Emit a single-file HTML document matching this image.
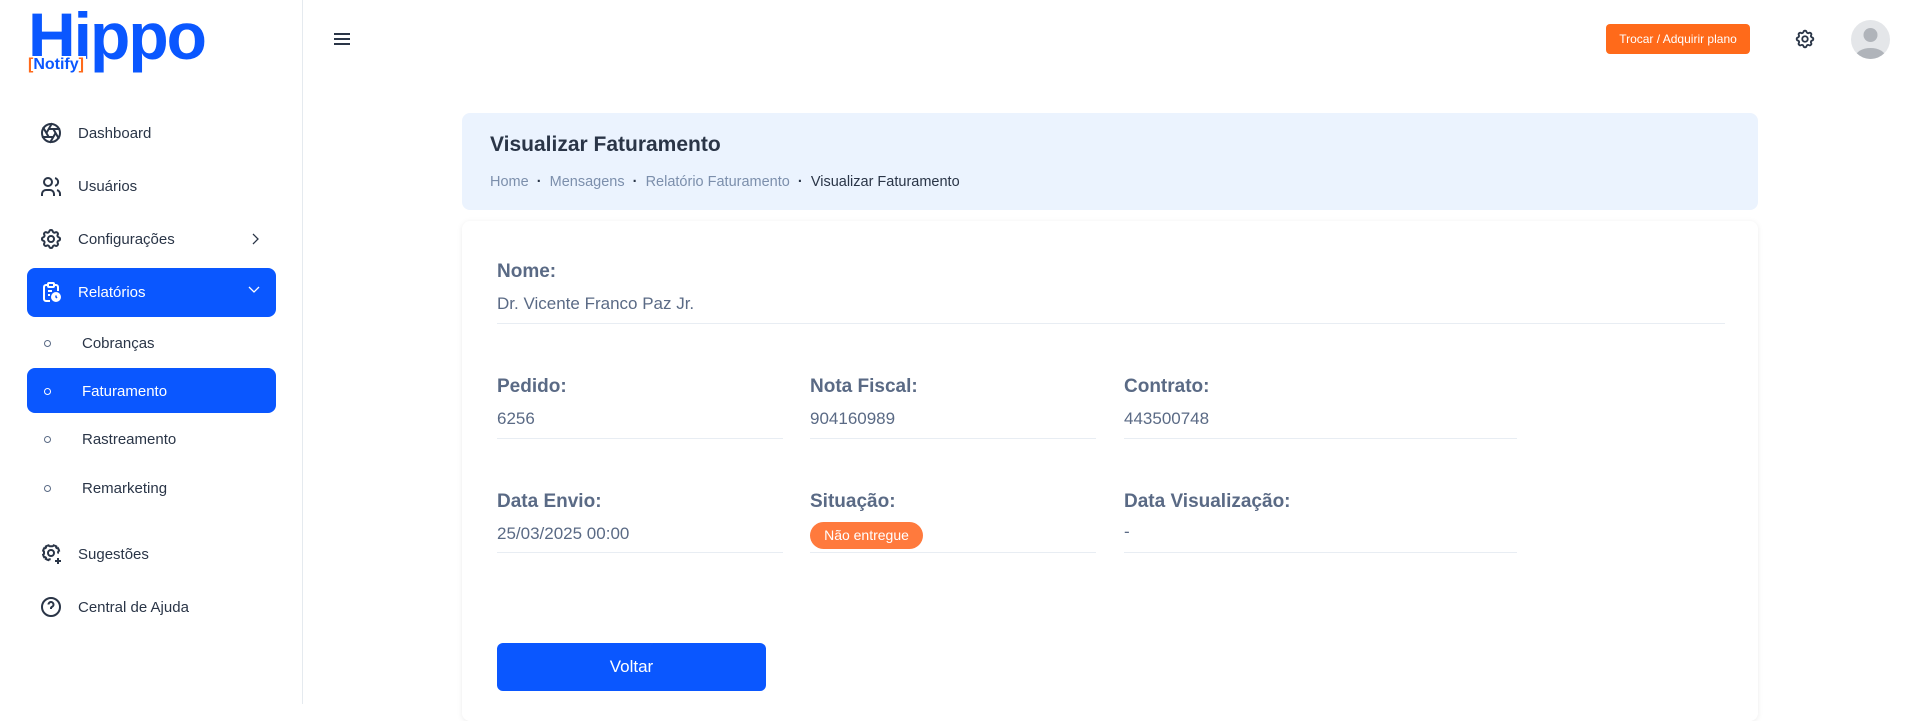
<!DOCTYPE html>
<html><head><meta charset="utf-8"><style>
*{margin:0;padding:0;box-sizing:border-box}
body{width:1918px;height:704px;overflow:hidden;background:#fff;font-family:"Liberation Sans",sans-serif;color:#2a3547;position:relative}
.side{position:absolute;left:0;top:0;width:303px;height:704px;border-right:1px solid #e5eaef;background:#fff}
.abs{position:absolute}
.nav{position:absolute;left:78px;font-size:15px;color:#2a3547}
.ico{position:absolute;left:39px;width:24px;height:24px}
.act{position:absolute;left:27px;width:249px;background:#0a57ff;border-radius:8px}
.sub{position:absolute;left:82px;font-size:15px;color:#2a3547}
.dot{position:absolute;left:44px;width:7px;height:7px;border:1.3px solid #5a6a85;border-radius:50%}
.lbl{position:absolute;font-size:19px;font-weight:bold;color:#5a6a85}
.val{position:absolute;font-size:17px;color:#5a6a85}
.ln{position:absolute;height:1px;background:#e8edf3}
b.d{font-weight:bold;color:#2a3547}
</style></head><body>
<div class="side">
  <div class="abs" style="left:28px;top:-2px;font-size:66px;font-weight:bold;color:#0a57ff;letter-spacing:-2px">Hippo</div>
  <div class="abs" style="left:28px;top:56px;font-size:16px;font-weight:bold;color:#0a57ff;background:#fff;padding-right:2px"><span style="color:#ff6a1a">[</span>Notify<span style="color:#ff6a1a">]</span></div>

  <svg class="ico" style="top:121px" viewBox="0 0 24 24" fill="none" stroke="#2a3547" stroke-width="2"><circle cx="12" cy="12" r="9"/><path d="M14.3 8l5.7 9.9M9.7 8h11.4M7.4 12l5.7-9.9M9.7 16L4 6.1M14.3 16H2.9M16.6 12l-5.7 9.9"/></svg>
  <div class="nav" style="top:125px">Dashboard</div>
  <svg class="ico" style="top:175px" viewBox="0 0 24 24" fill="none" stroke="#2a3547" stroke-width="2"><circle cx="9" cy="7" r="4"/><path d="M3 21v-2a4 4 0 0 1 4-4h4a4 4 0 0 1 4 4v2M16 3.1a4 4 0 0 1 0 7.8M21 21v-2a4 4 0 0 0-3-3.9"/></svg>
  <div class="nav" style="top:178px">Usuários</div>
  <svg class="ico" style="top:227px" viewBox="0 0 24 24" fill="none" stroke="#2a3547" stroke-width="2"><path d="M10.3 4.3c.4-1.8 3-1.8 3.4 0a1.7 1.7 0 0 0 2.6 1.1c1.5-.9 3.3.8 2.4 2.4a1.7 1.7 0 0 0 1 2.5c1.8.4 1.8 3 0 3.4a1.7 1.7 0 0 0-1 2.6c.9 1.5-.9 3.3-2.4 2.4a1.7 1.7 0 0 0-2.6 1c-.4 1.8-3 1.8-3.4 0a1.7 1.7 0 0 0-2.6-1c-1.5.9-3.3-.9-2.4-2.4a1.7 1.7 0 0 0-1-2.6c-1.8-.4-1.8-3 0-3.4a1.7 1.7 0 0 0 1-2.5c-.9-1.6.9-3.3 2.4-2.4a1.7 1.7 0 0 0 2.6-1.1z"/><circle cx="12" cy="12" r="3"/></svg>
  <div class="nav" style="top:231px">Configurações</div>
  <svg class="abs" style="left:250px;top:232px" width="12" height="14" viewBox="0 0 12 14" fill="none" stroke="#2a3547" stroke-width="1.3"><path d="M3 2l5 5-5 5"/></svg>

  <div class="act" style="top:268px;height:49px"></div>
  <svg class="ico" style="top:280px" viewBox="0 0 24 24" fill="none" stroke="#fff" stroke-width="2"><path d="M9 5H7a2 2 0 0 0-2 2v12a2 2 0 0 0 2 2h4M15 5h2a2 2 0 0 1 2 2v4"/><rect x="9" y="3" width="6" height="4" rx="1"/><path d="M9 11h4M9 15h2"/><circle cx="17" cy="17" r="4" fill="#fff"/><path d="M17 15.5V17l1 1" stroke="#0a57ff" stroke-width="1.5"/></svg>
  <div class="nav" style="top:284px;color:#fff">Relatórios</div>
  <svg class="abs" style="left:247px;top:284px" width="14" height="10" viewBox="0 0 14 10" fill="none" stroke="#fff" stroke-width="1.3"><path d="M2 3l5 5 5-5"/></svg>

  <div class="dot" style="top:340px"></div><div class="sub" style="top:335px">Cobranças</div>
  <div class="act" style="top:368px;height:45px"></div>
  <div class="dot" style="top:388px;border-color:#fff"></div><div class="sub" style="top:383px;color:#fff">Faturamento</div>
  <div class="dot" style="top:436px"></div><div class="sub" style="top:431px">Rastreamento</div>
  <div class="dot" style="top:485px"></div><div class="sub" style="top:480px">Remarketing</div>

  <svg class="ico" style="top:542px" viewBox="0 0 24 24" fill="none" stroke="#2a3547" stroke-width="2"><path d="M19.8 11.2c-.5-.2-.8-.7-.7-1.3.1-.6.5-1 1-1.2-.2-.9-.6-1.8-1.1-2.6-.5.3-1.1.2-1.5-.2s-.5-1-.2-1.5c-.8-.5-1.7-.9-2.6-1.1-.2.5-.7.9-1.2.9h-2.8c-.5 0-1-.4-1.2-.9-.9.2-1.8.6-2.6 1.1.3.5.2 1.1-.2 1.5s-1 .5-1.5.2c-.5.8-.9 1.7-1.1 2.6.5.2.9.7.9 1.2v1.6c0 .5-.4 1-.9 1.2.2.9.6 1.8 1.1 2.6.5-.3 1.1-.2 1.5.2s.5 1 .2 1.5c.8.5 1.7.9 2.6 1.1.2-.5.7-.9 1.2-.9h1"/><circle cx="12" cy="11" r="3"/><path d="M19 16v6M16 19h6"/></svg>
  <div class="nav" style="top:546px">Sugestões</div>
  <svg class="ico" style="top:595px" viewBox="0 0 24 24" fill="none" stroke="#2a3547" stroke-width="2"><circle cx="12" cy="12" r="9"/><path d="M9.5 9.5a2.5 2.5 0 1 1 3.5 2.3c-.6.3-1 .8-1 1.5v.7M12 17v.01"/></svg>
  <div class="nav" style="top:599px">Central de Ajuda</div>
</div>

<svg class="abs" style="left:333px;top:31px" width="18" height="16" viewBox="0 0 18 16" stroke="#2a3547" stroke-width="2"><path d="M1 3h16M1 8h16M1 13h16"/></svg>
<div class="abs" style="left:1606px;top:24px;width:144px;height:30px;background:#ff6a1a;border-radius:4px;color:#fff;font-size:12px;line-height:30px;text-align:center">Trocar / Adquirir plano</div>
<svg class="abs" style="left:1794px;top:28px" width="22" height="22" viewBox="0 0 24 24" fill="none" stroke="#2a3547" stroke-width="2"><path d="M10.3 4.3c.4-1.8 3-1.8 3.4 0a1.7 1.7 0 0 0 2.6 1.1c1.5-.9 3.3.8 2.4 2.4a1.7 1.7 0 0 0 1 2.5c1.8.4 1.8 3 0 3.4a1.7 1.7 0 0 0-1 2.6c.9 1.5-.9 3.3-2.4 2.4a1.7 1.7 0 0 0-2.6 1c-.4 1.8-3 1.8-3.4 0a1.7 1.7 0 0 0-2.6-1c-1.5.9-3.3-.9-2.4-2.4a1.7 1.7 0 0 0-1-2.6c-1.8-.4-1.8-3 0-3.4a1.7 1.7 0 0 0 1-2.5c-.9-1.6.9-3.3 2.4-2.4a1.7 1.7 0 0 0 2.6-1.1z"/><circle cx="12" cy="12" r="3"/></svg>
<svg class="abs" style="left:1851px;top:20px" width="39" height="39" viewBox="0 0 39 39"><defs><clipPath id="c"><circle cx="19.5" cy="19.5" r="19.5"/></clipPath></defs><circle cx="19.5" cy="19.5" r="19.5" fill="#e4e6e9"/><g clip-path="url(#c)" fill="#b0b4ba"><circle cx="19.5" cy="15" r="7"/><ellipse cx="19.5" cy="37" rx="15" ry="9"/></g></svg>

<div class="abs" style="left:462px;top:113px;width:1296px;height:97px;background:#ebf3fe;border-radius:8px"></div>
<div class="abs" style="left:490px;top:133px;font-size:21px;font-weight:bold;color:#2a3547">Visualizar Faturamento</div>
<div class="abs" style="left:490px;top:174px;font-size:14.5px;color:#7c8fac;white-space:pre">Home  <b class="d">·</b>  Mensagens  <b class="d">·</b>  Relatório Faturamento  <b class="d">·</b>  <span style="color:#2a3547">Visualizar Faturamento</span></div>

<div class="abs" style="left:462px;top:221px;width:1296px;height:500px;background:#fff;border-radius:8px;box-shadow:0 1px 6px rgba(0,0,0,.08)"></div>
<div class="lbl" style="left:497px;top:261px">Nome:</div>
<div class="val" style="left:497px;top:294px">Dr. Vicente Franco Paz Jr.</div>
<div class="ln" style="left:497px;top:323px;width:1228px"></div>

<div class="lbl" style="left:497px;top:376px">Pedido:</div>
<div class="val" style="left:497px;top:409px">6256</div>
<div class="ln" style="left:497px;top:438px;width:286px"></div>
<div class="lbl" style="left:810px;top:376px">Nota Fiscal:</div>
<div class="val" style="left:810px;top:409px">904160989</div>
<div class="ln" style="left:810px;top:438px;width:286px"></div>
<div class="lbl" style="left:1124px;top:376px">Contrato:</div>
<div class="val" style="left:1124px;top:409px">443500748</div>
<div class="ln" style="left:1124px;top:438px;width:393px"></div>

<div class="lbl" style="left:497px;top:491px">Data Envio:</div>
<div class="val" style="left:497px;top:524px">25/03/2025 00:00</div>
<div class="ln" style="left:497px;top:552px;width:286px"></div>
<div class="lbl" style="left:810px;top:491px">Situação:</div>
<div class="abs" style="left:810px;top:522px;width:113px;height:27px;background:#ff7a3d;border-radius:14px;color:#fff;font-size:14px;line-height:27px;text-align:center">Não entregue</div>
<div class="ln" style="left:810px;top:552px;width:286px"></div>
<div class="lbl" style="left:1124px;top:491px">Data Visualização:</div>
<div class="val" style="left:1124px;top:522px">-</div>
<div class="ln" style="left:1124px;top:552px;width:393px"></div>

<div class="abs" style="left:497px;top:643px;width:269px;height:48px;background:#0a57ff;border-radius:6px;color:#fff;font-size:17px;line-height:48px;text-align:center">Voltar</div>
</body></html>
